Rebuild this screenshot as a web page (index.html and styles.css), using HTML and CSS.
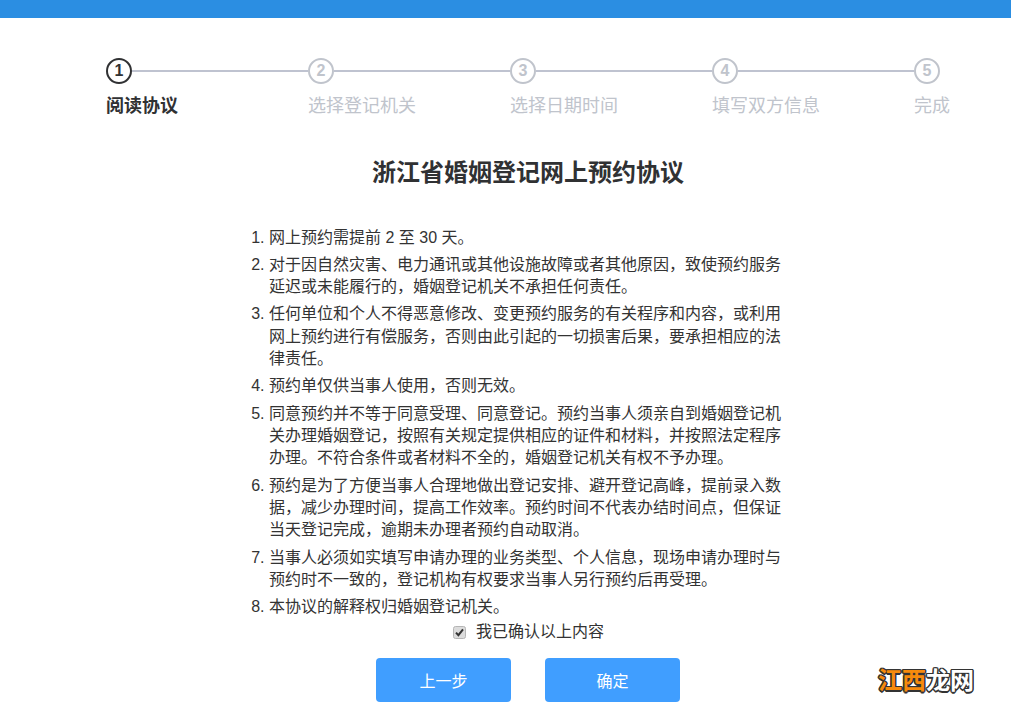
FILE: index.html
```html
<!DOCTYPE html>
<html lang="zh-CN">
<head>
<meta charset="utf-8">
<title>浙江省婚姻登记网上预约协议</title>
<link rel="stylesheet" href="styles.css">
</head>
<body>
<header class="topbar"></header>
<main class="page">
  <ol class="steps">
    <li class="step active"><div class="step-head"><span class="circle">1</span><span class="line"></span></div><div class="step-label">阅读协议</div></li>
    <li class="step"><div class="step-head"><span class="circle">2</span><span class="line"></span></div><div class="step-label">选择登记机关</div></li>
    <li class="step"><div class="step-head"><span class="circle">3</span><span class="line"></span></div><div class="step-label">选择日期时间</div></li>
    <li class="step"><div class="step-head"><span class="circle">4</span><span class="line"></span></div><div class="step-label">填写双方信息</div></li>
    <li class="step last"><div class="step-head"><span class="circle">5</span></div><div class="step-label">完成</div></li>
  </ol>
  <h1 class="title">浙江省婚姻登记网上预约协议</h1>
  <ol class="terms">
    <li>网上预约需提前 2 至 30 天。</li>
    <li>对于因自然灾害、电力通讯或其他设施故障或者其他原因，致使预约服务延迟或未能履行的，婚姻登记机关不承担任何责任。</li>
    <li>任何单位和个人不得恶意修改、变更预约服务的有关程序和内容，或利用网上预约进行有偿服务，否则由此引起的一切损害后果，要承担相应的法律责任。</li>
    <li>预约单仅供当事人使用，否则无效。</li>
    <li>同意预约并不等于同意受理、同意登记。预约当事人须亲自到婚姻登记机关办理婚姻登记，按照有关规定提供相应的证件和材料，并按照法定程序办理。不符合条件或者材料不全的，婚姻登记机关有权不予办理。</li>
    <li>预约是为了方便当事人合理地做出登记安排、避开登记高峰，提前录入数据，减少办理时间，提高工作效率。预约时间不代表办结时间点，但保证当天登记完成，逾期未办理者预约自动取消。</li>
    <li>当事人必须如实填写申请办理的业务类型、个人信息，现场申请办理时与预约时不一致的，登记机构有权要求当事人另行预约后再受理。</li>
    <li>本协议的解释权归婚姻登记机关。</li>
  </ol>
  <div class="confirm">
    <svg class="check" width="13" height="13" viewBox="0 0 13 13"><rect x="0.5" y="0.5" width="12" height="12" rx="2" fill="#dcdcdc" stroke="#b5b5b5"/><path d="M3 6.6 L5.4 9.2 L10 3.4" fill="none" stroke="#333" stroke-width="2"/></svg>
    <span>我已确认以上内容</span>
  </div>
  <div class="actions">
    <button class="btn" type="button">上一步</button>
    <button class="btn" type="button">确定</button>
  </div>
</main>
<div class="watermark"><span class="orange">江西</span>龙网</div>
</body>
</html>
```
FILE: styles.css
```css
* { box-sizing: border-box; }
html, body { margin: 0; padding: 0; }
body {
  height: 712px;
  overflow: hidden;
  background: #fff;
  color: #333;
  font-family: "Liberation Sans", "Noto Sans CJK SC", sans-serif;
}
.topbar { height: 18px; background: #2b8ee2; }
.page { display: flex; flex-direction: column; align-items: center; padding-left: 45px; }
.steps {
  list-style: none;
  display: flex;
  width: 844px;
  margin: 40px 0 0;
  padding: 0;
}
.step { width: 202px; color: #c0c4cc; }
.step.last { width: 36px; }
.step.active { color: #303133; }
.step-head { display: flex; align-items: center; height: 26px; }
.circle {
  flex: none;
  width: 26px;
  height: 26px;
  border: 2px solid #c0c4cc;
  border-radius: 50%;
  font-size: 16px;
  font-weight: 700;
  line-height: 22px;
  text-align: center;
}
.active .circle { border-color: #303133; }
.line { flex: 1; height: 2px; background: #bfc3d0; }
.step-label { margin-top: 8.5px; font-size: 18px; line-height: 26px; white-space: nowrap; }
.active .step-label { font-weight: 700; }
.title {
  margin: 36.5px 0 0;
  font-size: 24px;
  font-weight: 700;
  line-height: 36px;
  color: #303133;
}
.terms {
  width: 554px;
  margin: 35.6px 0 0;
  padding: 0 24px 0 18px;
  font-size: 16px;
  line-height: 22.4px;
  color: #333;
}
.terms li { margin-bottom: 4.8px; }
.confirm {
  display: flex;
  align-items: center;
  gap: 10px;
  font-size: 16px;
  line-height: 22px;
  margin: -2.2px 0 0 1px;
}
.check { flex: none; }
.actions { display: flex; gap: 34px; margin-top: 15px; }
.btn {
  width: 135px;
  height: 44px;
  border: 0;
  border-radius: 4px;
  background: #409eff;
  color: #fff;
  font: 16px "Liberation Sans", "Noto Sans CJK SC", sans-serif;
}
.watermark {
  position: absolute;
  left: 878px;
  top: 667px;
  font-size: 24px;
  line-height: 28px;
  font-weight: 700;
  color: #fff;
  text-shadow: -1.5px 0 #333, 1.5px 0 #333, 0 -1.5px #333, 0 1.5px #333, 1px 1px #333, -1px -1px #333, 1px -1px #333, -1px 1px #333;
}
.orange { color: #f78a0c; }
```
